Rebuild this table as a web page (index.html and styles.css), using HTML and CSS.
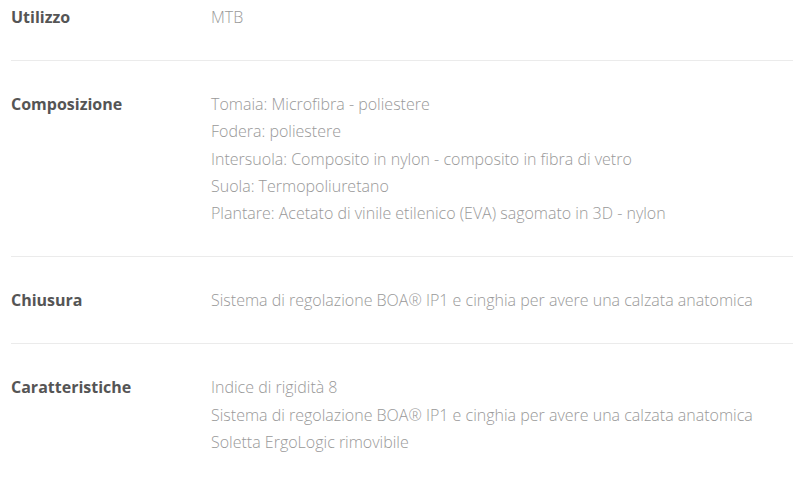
FILE: index.html
```html
<!DOCTYPE html>
<html lang="it">
<head>
<meta charset="utf-8">
<link rel="stylesheet" href="styles.css">
</head>
<body>
<div class="specs">
  <div class="row first">
    <div class="label">Utilizzo</div>
    <div class="value">MTB</div>
  </div>
  <div class="row">
    <div class="label">Composizione</div>
    <div class="value">Tomaia: Microfibra - poliestere<br>Fodera: poliestere<br>Intersuola: Composito in nylon - composito in fibra di vetro<br>Suola: Termopoliuretano<br>Plantare: Acetato di vinile etilenico (EVA) sagomato in 3D - nylon</div>
  </div>
  <div class="row">
    <div class="label">Chiusura</div>
    <div class="value">Sistema di regolazione BOA® IP1 e cinghia per avere una calzata anatomica</div>
  </div>
  <div class="row last">
    <div class="label">Caratteristiche</div>
    <div class="value">Indice di rigidità 8<br>Sistema di regolazione BOA® IP1 e cinghia per avere una calzata anatomica<br>Soletta ErgoLogic rimovibile</div>
  </div>
</div>
</body>
</html>
```
FILE: styles.css
```css
html, body {
  margin: 0;
  padding: 0;
  background: #fff;
}
body {
  font-family: "Open Sans", "Liberation Sans", sans-serif;
  font-size: 16px;
  line-height: 1.7;
}
.specs {
  margin-left: 11px;
}
.row {
  display: grid;
  grid-template-columns: 200px 1fr;
  padding: 30px 0 29px;
  border-bottom: 1px solid #ebebeb;
}
.row.first {
  padding-top: 4px;
}
.row.last {
  border-bottom: none;
}
.label {
  font-weight: 700;
  color: #555;
}
.value {
  font-weight: 300;
  color: #999;
}
```
